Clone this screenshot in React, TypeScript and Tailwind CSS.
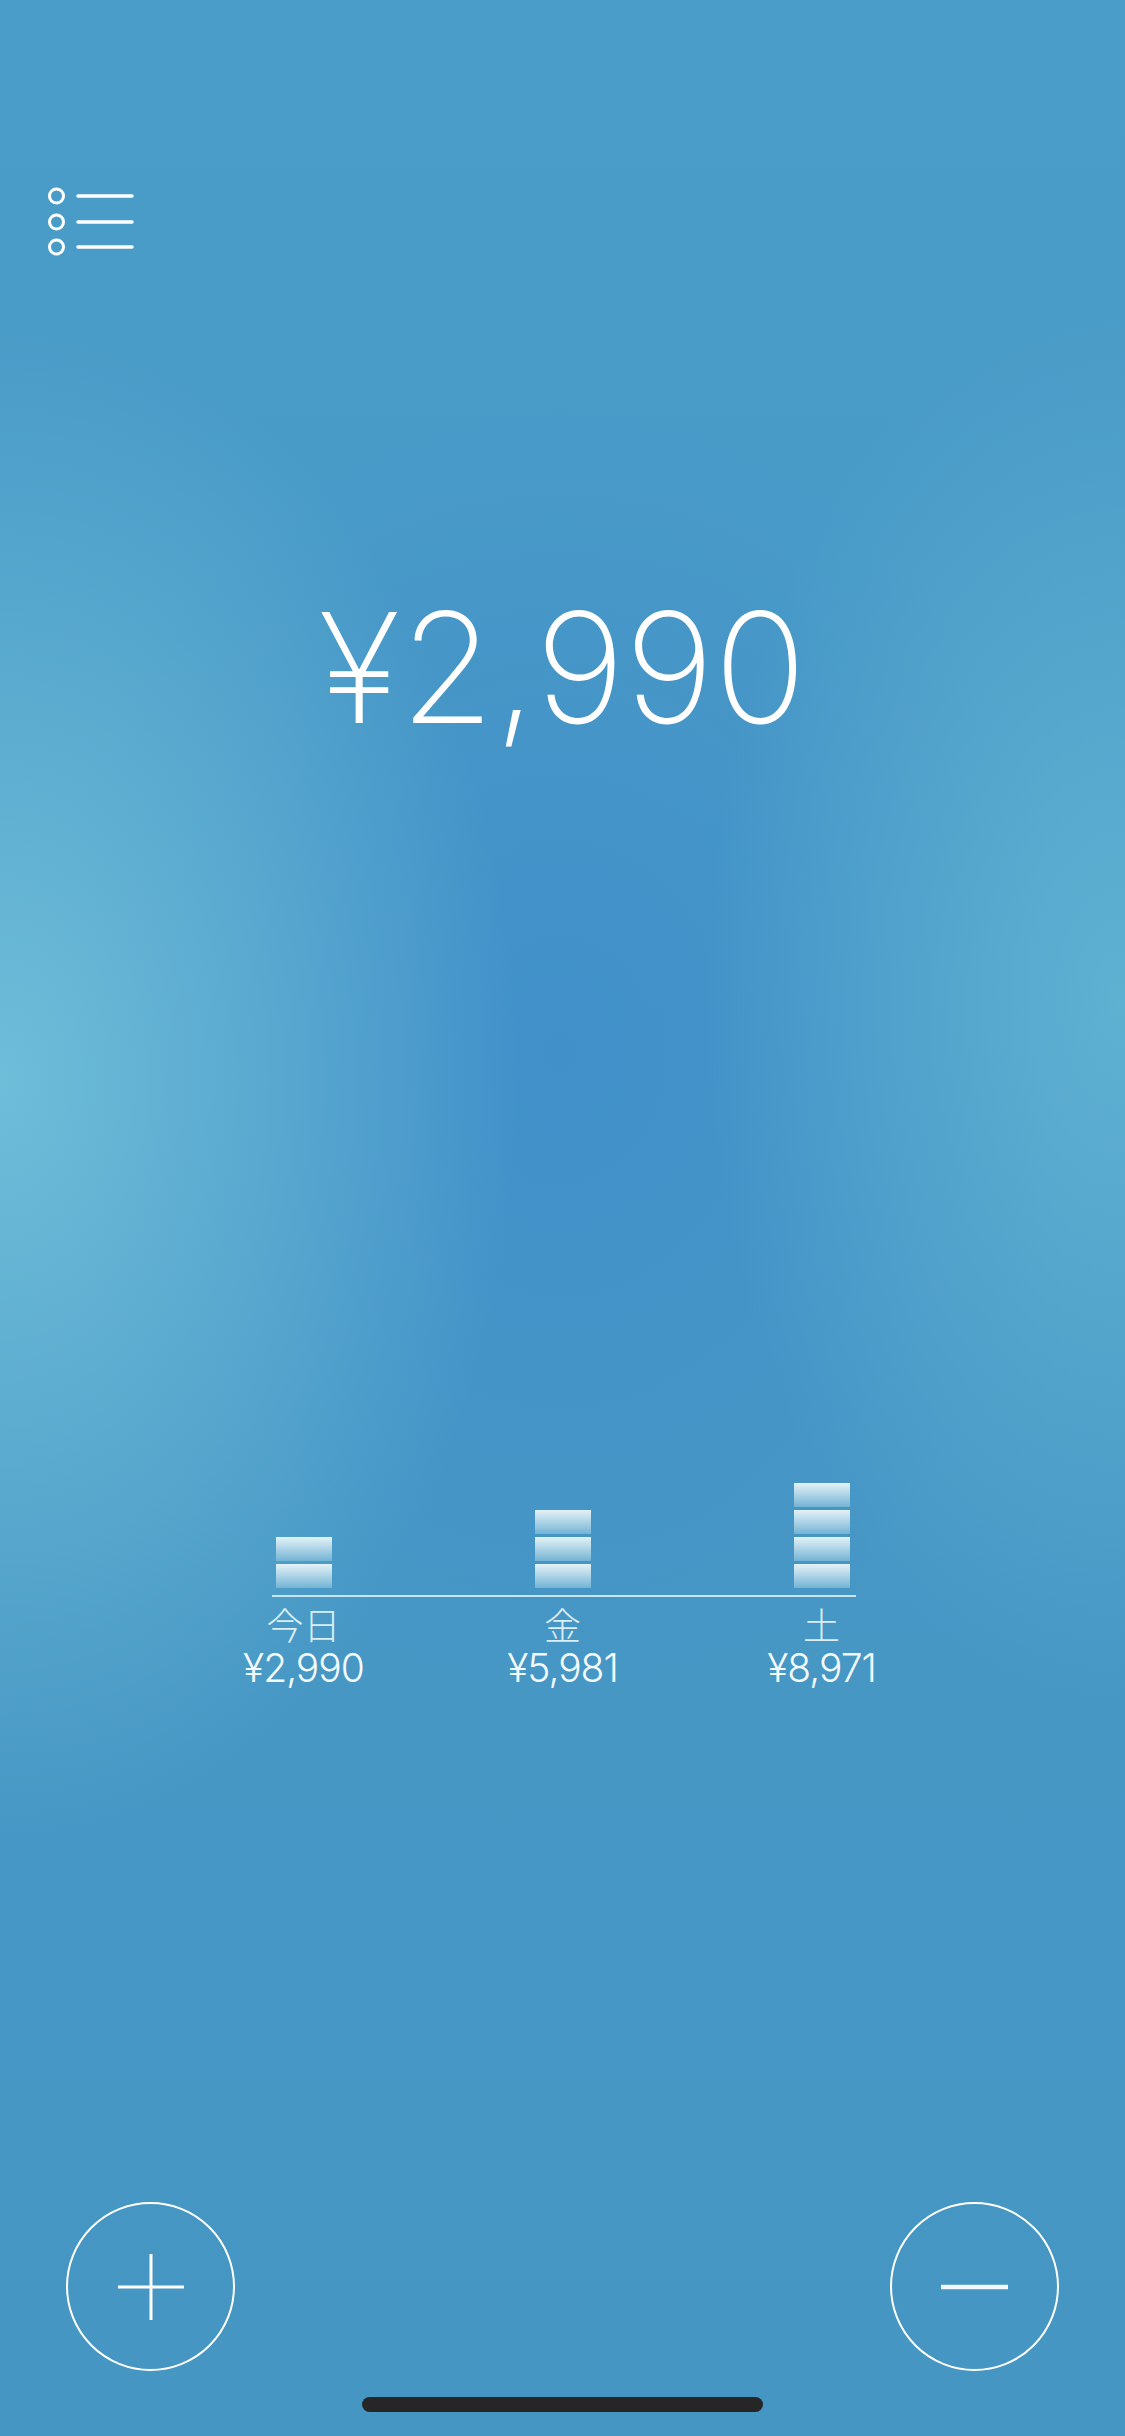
import React from 'react';

type Day = { label: string; amount: string; blocks: number };

const days: Day[] = [
  { label: '今日', amount: '¥2,990', blocks: 2 },
  { label: '金', amount: '¥5,981', blocks: 3 },
  { label: '土', amount: '¥8,971', blocks: 4 },
];

function MenuIcon() {
  return (
    <svg width="90" height="70" viewBox="0 0 90 70" fill="none" stroke="white">
      <circle cx="9.5" cy="10" r="7" strokeWidth="3" />
      <circle cx="9.5" cy="36" r="7" strokeWidth="3" />
      <circle cx="9.5" cy="61" r="7" strokeWidth="3" />
      <line x1="31" y1="10" x2="85" y2="10" strokeWidth="3.5" strokeLinecap="round" />
      <line x1="31" y1="36" x2="85" y2="36" strokeWidth="3.5" strokeLinecap="round" />
      <line x1="31" y1="61" x2="85" y2="61" strokeWidth="3.5" strokeLinecap="round" />
    </svg>
  );
}

function Bar({ blocks }: { blocks: number }) {
  return (
    <div className="flex flex-col gap-[3px]">
      {Array.from({ length: blocks }).map((_, i) => (
        <div key={i} className="w-[56px] h-[24px] bg-linear-to-b from-[#e4f2f7] to-[#72b4d4]" />
      ))}
    </div>
  );
}

export default function App() {
  return (
    <div
      className="relative w-[1125px] h-[2436px] overflow-hidden flex flex-col text-white bg-[radial-gradient(ellipse_520px_760px_at_0px_1080px,#6ebdd9,rgba(110,189,217,0)),radial-gradient(ellipse_420px_700px_at_1125px_1000px,#5fb1d2,rgba(95,177,210,0)),radial-gradient(ellipse_520px_640px_at_560px_1050px,#4190ca,rgba(65,144,202,0)),linear-gradient(#4a9dc8,#4798c6_45%,#4596c3)]"
      style={{ fontFamily: 'Inter, "Liberation Sans", "Noto Sans CJK JP", sans-serif' }}
    >
      <div className="mt-[186px] ml-[47px]">
        <MenuIcon />
      </div>

      <div className="mt-[335px] h-[153px] text-center text-[153px] leading-none font-extralight">
        ¥2,990
      </div>

      <div className="mt-[739px] ml-[174px] w-[777px]">
        <div className="flex items-end">
          {days.map((d) => (
            <div key={d.label} className="w-[259px] flex justify-center">
              <Bar blocks={d.blocks} />
            </div>
          ))}
        </div>
        <div className="mt-[7px] ml-[98px] w-[584px] h-[2px] bg-[#c6e5f0]" />
        <div className="flex mt-[8px]">
          {days.map((d) => (
            <div key={d.label} className="w-[259px] flex flex-col items-center">
              <div
                className="text-[37px] leading-[38px] font-light text-[#dcedf4]"
                style={{ fontFamily: '"Noto Sans CJK JP", sans-serif' }}
              >
                {d.label}
              </div>
              <div className="mt-[4px] text-[39px] leading-[42px] font-light tracking-[-1px] text-[#f4fafc]">
                {d.amount}
              </div>
            </div>
          ))}
        </div>
      </div>

      <div className="mt-auto px-[66px] flex justify-between">
        <button className="w-[169px] h-[169px] rounded-full border-2 border-white flex items-center justify-center">
          <svg width="70" height="70" viewBox="0 0 70 70" stroke="white" strokeWidth="3">
            <line x1="2" y1="35" x2="68" y2="35" />
            <line x1="35" y1="2" x2="35" y2="68" />
          </svg>
        </button>
        <button className="w-[169px] h-[169px] rounded-full border-2 border-white flex items-center justify-center">
          <svg width="70" height="10" viewBox="0 0 70 10" stroke="#f4f8fa" strokeWidth="4.5">
            <line x1="1" y1="5" x2="68" y2="5" />
          </svg>
        </button>
      </div>

      <div className="mt-[26px] mb-[24px] mx-auto w-[401px] h-[15px] rounded-full bg-[#262626]" />
    </div>
  );
}
